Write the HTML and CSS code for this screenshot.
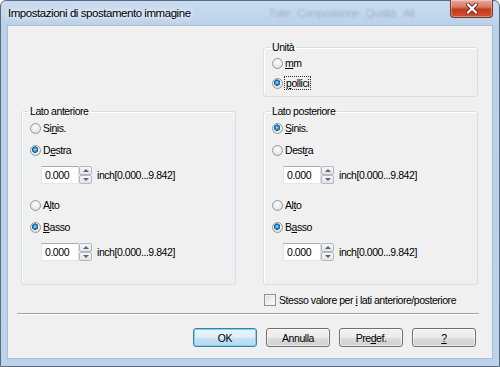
FILE: index.html
```html
<!DOCTYPE html>
<html lang="it">
<head>
  <meta charset="UTF-8">
  <title>Impostazioni di spostamento immagine</title>
  <link rel="stylesheet" href="styles.css">
</head>
<body>
  <div class="window">
    <div class="titlebar">
      <span class="title">Impostazioni di spostamento immagine</span>
      <span class="behind">Tutte&nbsp;&nbsp;&nbsp;Composizione&nbsp;&nbsp;&nbsp;Qualità&nbsp;&nbsp;&nbsp;Alt</span>
      <button class="close" aria-label="Chiudi">
        <svg width="14" height="11" viewBox="0 0 14 11">
          <path d="M3 1.5 L11 9.5 M11 1.5 L3 9.5" stroke="#5a2a20" stroke-width="4" stroke-linecap="round"/>
          <path d="M3 1.5 L11 9.5 M11 1.5 L3 9.5" stroke="#fff" stroke-width="2.4" stroke-linecap="round"/>
        </svg>
      </button>
    </div>

    <div class="client">
      <div class="groups">
        <fieldset class="group units">
          <legend>Unità</legend>
          <label class="opt"><input type="radio" name="unit"><span><u>m</u>m</span></label>
          <label class="opt"><input type="radio" name="unit" checked><span class="focus"><u>p</u>ollici</span></label>
        </fieldset>

        <fieldset class="group side">
          <legend>Lato anteriore</legend>
          <label class="opt"><input type="radio" name="fh"><span>Si<u>n</u>is.</span></label>
          <label class="opt"><input type="radio" name="fh" checked><span>D<u>e</u>stra</span></label>
          <div class="spin-row">
            <div class="spin">
              <input type="text" value="0.000">
              <div class="arrows"><span class="up"></span><span class="down"></span></div>
            </div>
            <span class="range">inch[0.000...9.842]</span>
          </div>
          <label class="opt"><input type="radio" name="fv"><span>A<u>l</u>to</span></label>
          <label class="opt"><input type="radio" name="fv" checked><span><u>B</u>asso</span></label>
          <div class="spin-row">
            <div class="spin">
              <input type="text" value="0.000">
              <div class="arrows"><span class="up"></span><span class="down"></span></div>
            </div>
            <span class="range">inch[0.000...9.842]</span>
          </div>
        </fieldset>

        <fieldset class="group side">
          <legend>Lato posteriore</legend>
          <label class="opt"><input type="radio" name="bh" checked><span><u>S</u>inis.</span></label>
          <label class="opt"><input type="radio" name="bh"><span>Dest<u>r</u>a</span></label>
          <div class="spin-row">
            <div class="spin">
              <input type="text" value="0.000">
              <div class="arrows"><span class="up"></span><span class="down"></span></div>
            </div>
            <span class="range">inch[0.000...9.842]</span>
          </div>
          <label class="opt"><input type="radio" name="bv"><span>Al<u>t</u>o</span></label>
          <label class="opt"><input type="radio" name="bv" checked><span>B<u>a</u>sso</span></label>
          <div class="spin-row">
            <div class="spin">
              <input type="text" value="0.000">
              <div class="arrows"><span class="up"></span><span class="down"></span></div>
            </div>
            <span class="range">inch[0.000...9.842]</span>
          </div>
        </fieldset>
      </div>

      <label class="check"><input type="checkbox"><span>Stesso valore per <u>i</u> lati anteriore/posteriore</span></label>

      <hr class="sep">

      <div class="buttons">
        <button class="btn default">OK</button>
        <button class="btn">Annulla</button>
        <button class="btn">Pre<u>d</u>ef.</button>
        <button class="btn"><u>?</u></button>
      </div>
    </div>
  </div>
</body>
</html>
```

FILE: styles.css
```css
  /* Reset */
  * {
    box-sizing: border-box;
    margin: 0;
    padding: 0;
  }

  body {
    font-family: "Liberation Sans", Arial, sans-serif;
    font-size: 10.5px;
    letter-spacing: -0.45px;
    color: #000;
    background: #fff;
    width: 500px;
    height: 367px;
    overflow: hidden;
  }

  u {
    text-decoration: underline;
    text-underline-offset: 1px;
  }

  /* Aero window frame */
  .window {
    width: 500px;
    height: 367px;
    border: 1px solid #5b6a7c;
    border-radius: 6px 6px 0 0;
    background: linear-gradient(to bottom, #c9dcf0 0, #bad1ea 26px, #bcd3ec 100%);
    padding: 0 6px 7px 6px;
    display: flex;
    flex-direction: column;
  }

  .titlebar {
    height: 24px;
    display: flex;
    align-items: flex-start;
  }

  .title {
    font-size: 11.5px;
    letter-spacing: -0.45px;
    line-height: 25px;
    padding-left: 1px;
    white-space: nowrap;
    flex: none;
    text-shadow: 0 0 5px #fff, 0 0 8px #fff;
  }

  .behind {
    margin-left: 78px;
    line-height: 24px;
    white-space: nowrap;
    color: #6a7d92;
    opacity: 0.4;
    filter: blur(1.3px);
    overflow: hidden;
  }

  .close {
    margin-left: auto;
    margin-top: -1px;
    width: 43px;
    height: 18px;
    flex: none;
    border: 1px solid #6b3a2e;
    border-top: none;
    border-radius: 0 0 4px 4px;
    background: linear-gradient(to bottom, #e9a99a 0, #d97a63 40%, #c8381c 55%, #d2502f 100%);
    box-shadow: inset 0 0 0 1px rgba(255, 255, 255, 0.35);
    display: flex;
    align-items: center;
    justify-content: center;
  }

  .close svg {
    display: block;
  }

  /* Client area */
  .client {
    flex: 1;
    background: #f0f0f0;
    border: 1px solid #a9bcd2;
    display: flex;
    flex-direction: column;
  }

  .groups {
    display: grid;
    grid-template-columns: 215px 215px;
    column-gap: 27px;
    row-gap: 8px;
    padding-left: 13px;
    margin-top: 15px;
  }

  .group {
    border: 1px solid #d5dfe5;
    border-radius: 3px;
    padding: 0 8px 5px 8px;
    display: flex;
    flex-direction: column;
    box-shadow: inset 1px 1px 0 #fff;
  }

  .group legend {
    line-height: 13px;
    padding: 0 2px;
    margin-left: -2px;
  }

  .units {
    grid-column: 2;
    padding-top: 1px;
  }

  .units .opt + .opt {
    margin-top: 4px;
  }

  .side {
    height: 180px;
    padding-top: 2px;
  }

  .opt {
    display: flex;
    align-items: center;
    height: 16px;
    white-space: nowrap;
  }

  .side .opt + .opt {
    margin-top: 6px;
  }

  .spin-row {
    display: flex;
    align-items: center;
    margin-top: 8px;
    margin-left: 11px;
  }

  .spin-row + .opt {
    margin-top: 13px;
  }

  .focus {
    outline: 1px dotted #333;
    padding: 0 1px;
  }

  /* Win7 radio */
  input[type="radio"] {
    appearance: none;
    width: 11px;
    height: 11px;
    border-radius: 50%;
    border: 1px solid #8e9aa4;
    background: radial-gradient(circle at 50% 35%, #fdfdfd 0, #e4e6e8 70%, #d3d6d9 100%);
    margin-right: 2px;
    flex: none;
  }

  input[type="radio"]:checked {
    background:
      radial-gradient(circle at 45% 40%, #9fe0fb 0, #3a9ad7 1.6px, #16507f 3px, transparent 3.4px),
      radial-gradient(circle at 50% 35%, #fdfdfd 0, #e4e6e8 70%, #d3d6d9 100%);
  }

  /* Win7 checkbox */
  .check {
    display: flex;
    align-items: center;
    height: 16px;
    margin-top: 7px;
    margin-left: 256px;
    white-space: nowrap;
  }

  input[type="checkbox"] {
    appearance: none;
    width: 12px;
    height: 12px;
    border: 1px solid #8e8f8f;
    background: linear-gradient(135deg, #dcdcdc 0, #f4f4f4 70%, #fff 100%);
    box-shadow: inset 0 0 0 1px #f4f4f4;
    margin-right: 3px;
    flex: none;
  }

  /* Spin box */
  .spin {
    display: flex;
    height: 18px;
    margin-right: 5px;
  }

  .spin input {
    width: 38px;
    height: 18px;
    border: 1px solid #abadb3;
    border-color: #abadb3 #dbdfe6 #e3e9ef #e2e3ea;
    background: #fff;
    font: inherit;
    letter-spacing: inherit;
    padding-left: 3px;
    outline: none;
  }

  .arrows {
    width: 13px;
    display: flex;
    flex-direction: column;
  }

  .arrows span {
    flex: 1;
    border: 1px solid #b4b8bd;
    border-radius: 2px;
    background: linear-gradient(to bottom, #f7f7f7, #e3e4e6);
    display: flex;
    align-items: center;
    justify-content: center;
  }

  .arrows .up::before {
    content: "";
    border-left: 3px solid transparent;
    border-right: 3px solid transparent;
    border-bottom: 3px solid #51658a;
  }

  .arrows .down::before {
    content: "";
    border-left: 3px solid transparent;
    border-right: 3px solid transparent;
    border-top: 3px solid #51658a;
  }

  .range {
    white-space: nowrap;
  }

  /* Separator */
  .sep {
    border: none;
    border-top: 1px solid #a0a0a0;
    border-bottom: 1px solid #fff;
    margin: 5px 13px 0 9px;
  }

  /* Buttons */
  .buttons {
    display: flex;
    justify-content: flex-end;
    gap: 9px;
    margin-top: 13px;
    padding-right: 16px;
  }

  .btn {
    width: 64px;
    height: 19px;
    font: inherit;
    letter-spacing: inherit;
    color: #000;
    border: 1px solid #707070;
    border-radius: 3px;
    background: linear-gradient(to bottom, #f2f2f2 0, #ebebeb 50%, #dddddd 51%, #cfcfcf 100%);
    box-shadow: inset 0 0 0 1px rgba(255, 255, 255, 0.6);
  }

  .btn.default {
    border-color: #3c7fb1;
    background: linear-gradient(to bottom, #eaf6fd 0, #d9eefa 50%, #c6e3f5 51%, #b7d7eb 100%);
    box-shadow: inset 0 0 0 1px #7fd0f6;
  }
```
